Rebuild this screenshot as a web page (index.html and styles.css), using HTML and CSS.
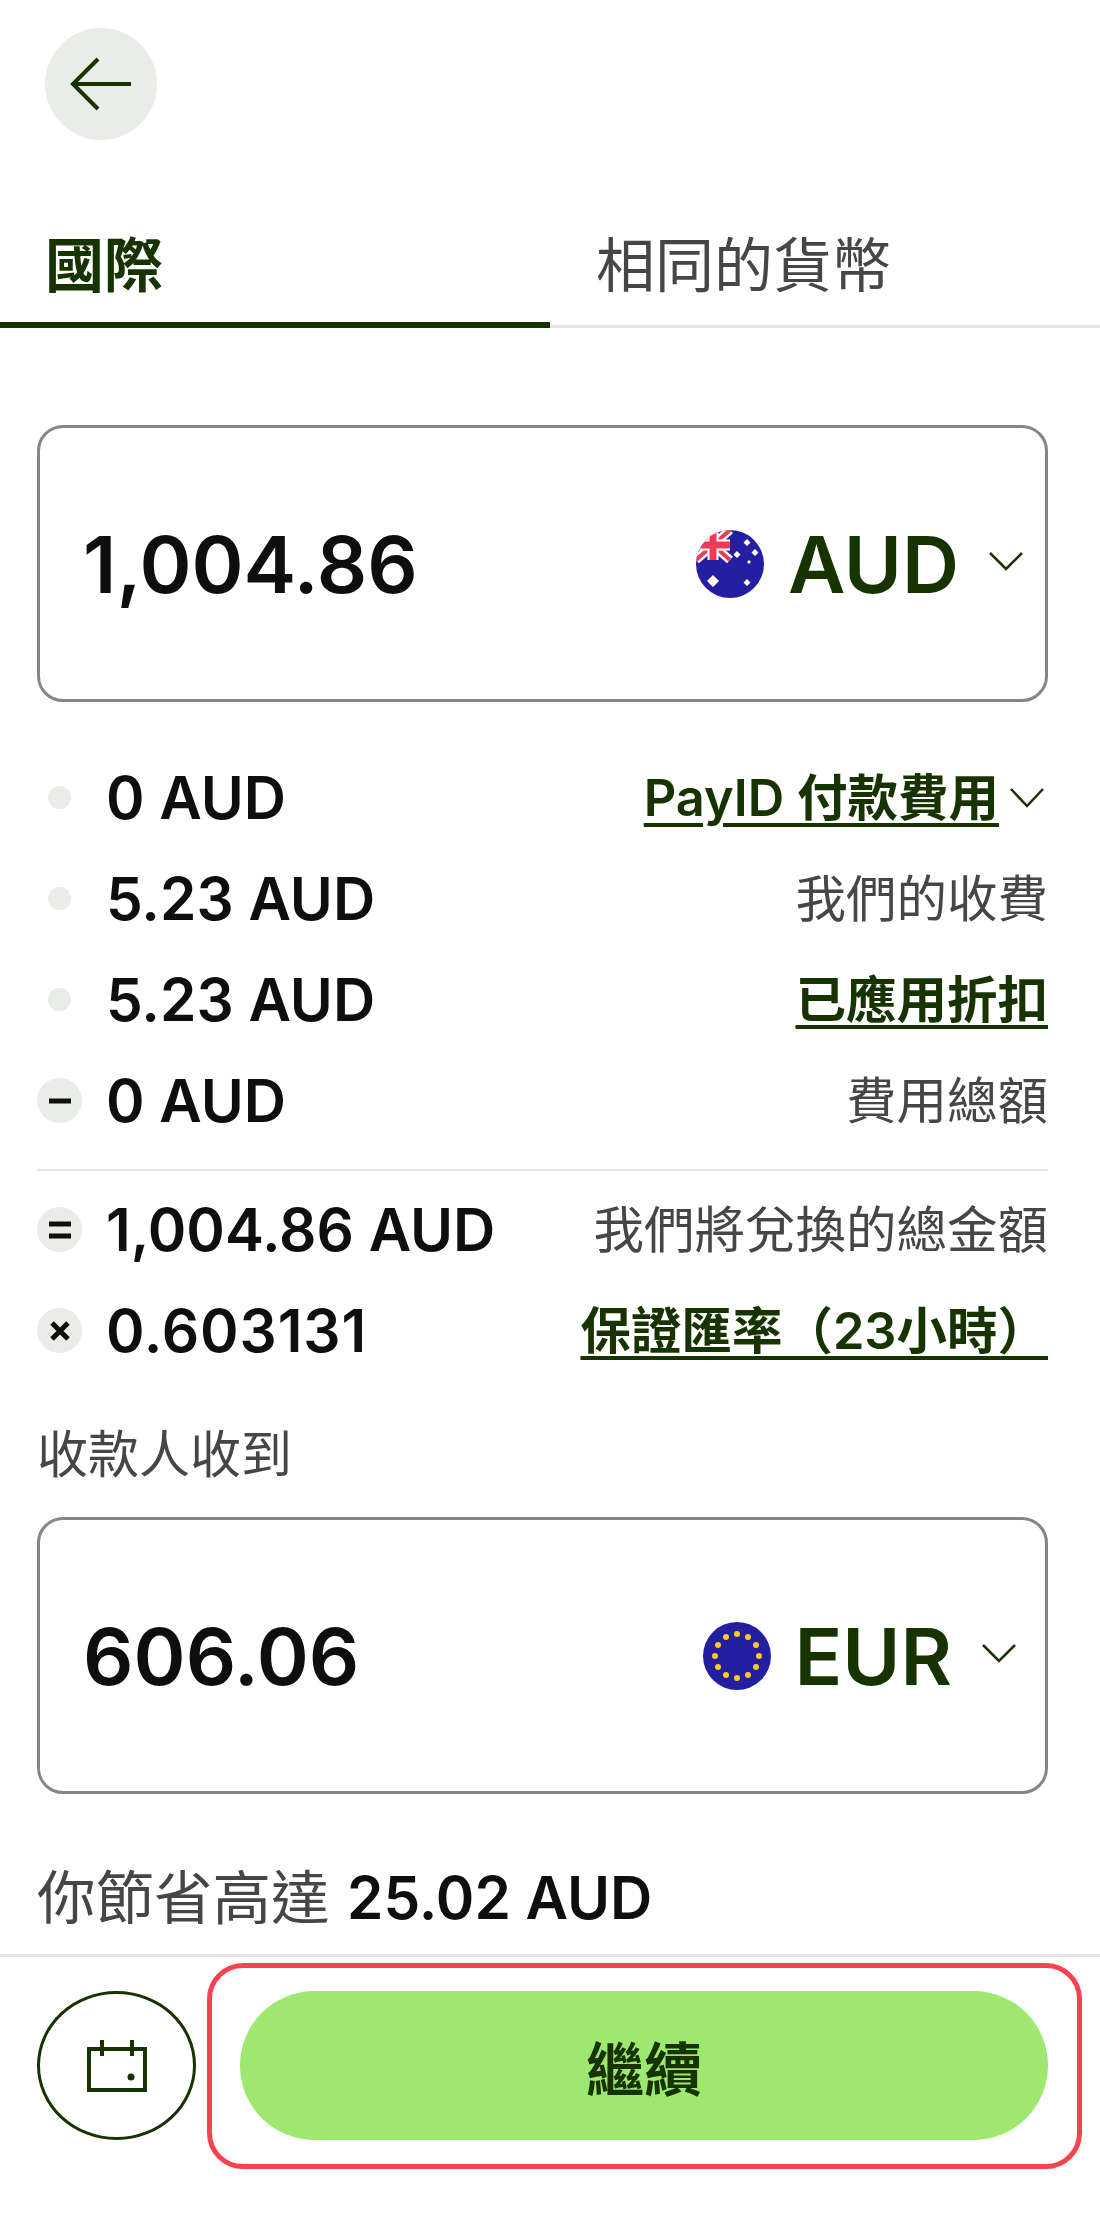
FILE: index.html

```html
<!doctype html>
<html>
<head>
    <title>國際匯款</title>
    <meta charset="utf-8" />
    <link rel="stylesheet" href="styles.css">
</head>
<body>
<div id="container">
    <button class="back">
        <svg width="62" height="54" viewBox="0 0 62 54"><path d="M28 2 L3 27 L28 52 M3 27 H61" fill="none" stroke="#163300" stroke-width="4"/></svg>
    </button>

    <div class="tabs">
        <div class="tab active">國際</div>
        <div class="tab">相同的貨幣</div>
    </div>

    <div class="content">
        <div class="amount-box">
            <div class="amount">1,004.86</div>
            <div class="currency aud">
                <svg class="flag" width="68" height="68" viewBox="0 0 68 68">
                    <clipPath id="audclip"><circle cx="34" cy="34" r="34"/></clipPath>
                    <g clip-path="url(#audclip)">
                        <rect width="68" height="68" fill="#231fa0"/>
                        <path d="M0 0 L34 30 M34 0 L0 30" stroke="#fff" stroke-width="9"/>
                        <path d="M0 0 L34 30 M34 0 L0 30" stroke="#f03a55" stroke-width="4"/>
                        <path d="M17 0 V30 M0 15 H34" stroke="#fff" stroke-width="11"/>
                        <path d="M17 0 V30 M0 15 H34" stroke="#f03a55" stroke-width="7"/>
                        <path d="M17 45 L23 51 L17 57 L11 51 Z M51 9 L54.500 12.500 L51 16 L47.500 12.500 Z M41 21 L44.500 24.500 L41 28 L37.500 24.500 Z M59 19 L62.500 22.500 L59 26 L55.500 22.500 Z M53 30 L55 32 L53 34 L51 32 Z M51 49 L54.500 52.500 L51 56 L47.500 52.500 Z" fill="#fff"/>
                    </g>
                </svg>
                <span class="code">AUD</span>
                <svg class="chev" width="34" height="19" viewBox="0 0 34 19"><path d="M1 1 L17 17 L33 1" fill="none" stroke="#163300" stroke-width="2.500"/></svg>
            </div>
        </div>

        <div class="rows">
            <div class="row">
                <span class="mark"><i class="dot"></i></span>
                <span class="val">0 AUD</span>
                <span class="note link">PayID 付款費用</span>
                <svg class="small-chev" width="34" height="20" viewBox="0 0 34 20"><path d="M1 1 L17 18 L33 1" fill="none" stroke="#163300" stroke-width="2.500"/></svg>
            </div>
            <div class="row">
                <span class="mark"><i class="dot"></i></span>
                <span class="val">5.23 AUD</span>
                <span class="note">我們的收費</span>
            </div>
            <div class="row">
                <span class="mark"><i class="dot"></i></span>
                <span class="val">5.23 AUD</span>
                <span class="note link">已應用折扣</span>
            </div>
            <div class="row">
                <span class="mark sign">
                    <svg width="24" height="24" viewBox="0 0 24 24"><path d="M1 12 H23" stroke="#0e0f0c" stroke-width="5"/></svg>
                </span>
                <span class="val">0 AUD</span>
                <span class="note">費用總額</span>
            </div>
            <hr class="rule">
            <div class="row">
                <span class="mark sign">
                    <svg width="24" height="24" viewBox="0 0 24 24"><path d="M1 6 H23 M1 18 H23" stroke="#0e0f0c" stroke-width="5"/></svg>
                </span>
                <span class="val">1,004.86 AUD</span>
                <span class="note">我們將兌換的總金額</span>
            </div>
            <div class="row">
                <span class="mark sign">
                    <svg width="24" height="24" viewBox="0 0 24 24"><path d="M4 4 L20 20 M20 4 L4 20" stroke="#0e0f0c" stroke-width="5"/></svg>
                </span>
                <span class="val rate">0.603131</span>
                <span class="note link">保證匯率（23小時）</span>
            </div>
        </div>

        <div class="recv-label">收款人收到</div>

        <div class="amount-box">
            <div class="amount second">606.06</div>
            <div class="currency eur">
                <svg class="flag" width="68" height="68" viewBox="0 0 68 68">
                    <circle cx="34" cy="34" r="34" fill="#231fa0"/>
                    <g fill="#ffc928">
                        <circle cx="34" cy="12" r="3"/><circle cx="45" cy="15" r="3"/><circle cx="53" cy="23" r="3"/>
                        <circle cx="56" cy="34" r="3"/><circle cx="53" cy="45" r="3"/><circle cx="45" cy="53" r="3"/>
                        <circle cx="34" cy="56" r="3"/><circle cx="23" cy="53" r="3"/><circle cx="15" cy="45" r="3"/>
                        <circle cx="12" cy="34" r="3"/><circle cx="15" cy="23" r="3"/><circle cx="23" cy="15" r="3"/>
                    </g>
                </svg>
                <span class="code">EUR</span>
                <svg class="chev" width="34" height="19" viewBox="0 0 34 19"><path d="M1 1 L17 17 L33 1" fill="none" stroke="#163300" stroke-width="2.500"/></svg>
            </div>
        </div>

        <div class="savings">你節省高達 <b>25.02 AUD</b></div>
    </div>

    <div class="bottom">
        <button class="schedule">
            <svg width="60" height="52" viewBox="0 0 60 52"><path d="M2 9 H58 V50 H2 Z M15 0 V16 M45 0 V16" fill="none" stroke="#163300" stroke-width="4"/><circle cx="44" cy="37" r="3.500" fill="#163300"/></svg>
        </button>
        <button class="go">繼續</button>
        <div class="highlight"></div>
    </div>
</div>
</body>
</html>
```

FILE: styles.css

```css
* {
    box-sizing: border-box;
}
html, body {
    margin: 0;
    background: #fff;
}
body {
    font-family: Inter, "Noto Sans CJK TC", sans-serif;
    color: #0e0f0c;
}
#container {
    width: 1100px;
    height: 2221px;
    overflow: hidden;
}
button {
    font-family: inherit;
    border: none;
    padding: 0;
}

.back {
    display: flex;
    align-items: center;
    justify-content: center;
    width: 112px;
    height: 112px;
    margin: 28px 0 0 45px;
    border-radius: 50%;
    background: #e9ece7;
}

.tabs {
    display: flex;
    height: 186px;
    margin-top: 2px;
    border-bottom: 3px solid #e4e4e2;
}
.tab {
    width: 550px;
    height: 186px;
    padding: 84px 0 0 45px;
    font-size: 59px;
    line-height: 80px;
    color: #454745;
}
.tab + .tab {
    padding-left: 46px;
}
.tab.active {
    font-weight: 700;
    color: #163300;
    border-bottom: 6px solid #163300;
}

.content {
    padding: 0 52px 0 37px;
    margin-top: 97px;
}
.amount-box {
    display: flex;
    align-items: center;
    justify-content: space-between;
    height: 277px;
    border: 3px solid #868685;
    border-radius: 26px;
    padding: 0 0 0 43px;
}
.amount {
    font-size: 79px;
    font-weight: 600;
}
.currency {
    display: flex;
    align-items: center;
}
.currency.aud {
    padding-right: 22px;
}
.currency.eur {
    padding-right: 29px;
}
.code {
    font-size: 79px;
    font-weight: 600;
    color: #163300;
    line-height: 90px;
    margin-left: 24px;
}
.chev {
    margin-left: 30px;
    margin-top: -4px;
}

.rows {
    margin-top: 45px;
}
.row {
    display: flex;
    align-items: center;
    height: 101px;
}
.mark {
    display: flex;
    align-items: center;
    justify-content: center;
    width: 45px;
    height: 45px;
    margin-right: 24px;
    flex: none;
}
.mark.sign {
    border-radius: 50%;
    background: #e9ece7;
}
.dot {
    display: block;
    width: 23px;
    height: 23px;
    border-radius: 50%;
    background: #e9ece7;
}
.val {
    font-size: 58.500px;
    font-weight: 600;
    margin-right: auto;
    white-space: nowrap;
}
.val.rate {
    letter-spacing: 0.9px;
}
.note {
    font-size: 50.500px;
    line-height: 60px;
    color: #454745;
    white-space: nowrap;
}
.note.link {
    color: #163300;
    font-weight: 600;
    text-decoration: underline;
    text-decoration-thickness: 4px;
    text-underline-offset: 7px;
}
.small-chev {
    margin: 0 4px 0 11px;
}
.rule {
    height: 2px;
    border: none;
    background: #e4e4e2;
    margin: 18px 0 8px;
}

.recv-label {
    font-size: 51px;
    line-height: 60px;
    color: #454745;
    margin-top: 44px;
    margin-bottom: 32px;
}

.savings {
    font-size: 58.500px;
    line-height: 70px;
    color: #454745;
    margin-top: 69px;
}
.savings b {
    font-weight: 600;
    color: #0e0f0c;
    margin-left: 1px;
}

.bottom {
    position: relative;
    display: flex;
    align-items: flex-start;
    height: 267px;
    margin-top: 21px;
    padding: 34px 52px 0 37px;
    border-top: 3px solid #e4e4e2;
}
.schedule {
    display: flex;
    align-items: center;
    justify-content: center;
    width: 159px;
    height: 149px;
    border: 3px solid #163300;
    border-radius: 50%;
    background: #fff;
}
.go {
    width: 808px;
    height: 149px;
    margin-left: 44px;
    border-radius: 75px;
    background: #9fe870;
    color: #163300;
    font-size: 58px;
    font-weight: 700;
}
.highlight {
    position: absolute;
    left: 207px;
    top: 6px;
    width: 875px;
    height: 206px;
    border: 5px solid #f5444f;
    border-radius: 36px;
}
```
